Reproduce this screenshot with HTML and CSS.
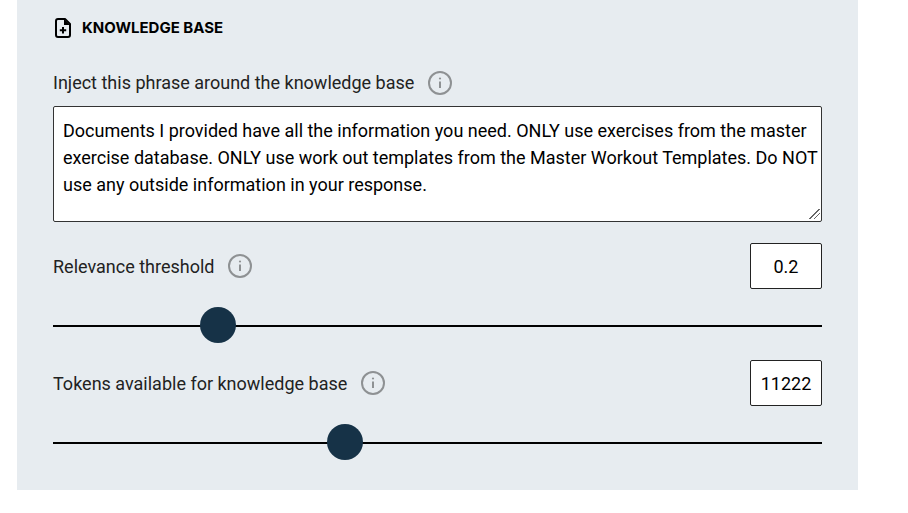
FILE: index.html
```html
<!DOCTYPE html>
<html lang="en">
<head>
<meta charset="utf-8">
<title>Knowledge base</title>
<link rel="stylesheet" href="styles.css">
</head>
<body>
<svg class="sprite" aria-hidden="true">
  <symbol id="info" viewBox="0 0 24 24">
    <circle cx="12" cy="12" r="11" fill="none" stroke="currentColor" stroke-width="2"/>
    <path d="M12 10.5V17" fill="none" stroke="currentColor" stroke-width="2"/>
    <circle cx="12" cy="7.5" r="1.1" fill="currentColor"/>
  </symbol>
</svg>
<main class="panel">
  <h2 class="heading">
    <svg class="heading-icon" viewBox="0 0 16 20" aria-hidden="true">
      <path d="M10 1H3a2 2 0 0 0-2 2v14a2 2 0 0 0 2 2h10a2 2 0 0 0 2-2V6z" fill="none" stroke="currentColor" stroke-width="2" stroke-linejoin="round"/>
      <path d="M9 1v6h6z" fill="currentColor"/>
      <path d="M8 9v6.500M4.800 12.200h6.400" fill="none" stroke="currentColor" stroke-width="2"/>
    </svg>
    KNOWLEDGE BASE
  </h2>
  <div class="label-row">
    <label for="phrase">Inject this phrase around the knowledge base</label>
    <svg class="info"><use href="#info"/></svg>
  </div>
  <textarea id="phrase" class="phrase" spellcheck="false">Documents I provided have all the information you need. ONLY use exercises from the master exercise database. ONLY use work out templates from the Master Workout Templates. Do NOT use any outside information in your response.</textarea>
  <section class="setting">
    <div class="label-row">
      <label for="relevance">Relevance threshold</label>
      <svg class="info"><use href="#info"/></svg>
      <input class="value" type="text" value="0.2" aria-label="Relevance threshold value">
    </div>
    <input id="relevance" class="slider" type="range" min="0" max="1" step="0.1" value="0.2">
  </section>
  <section class="setting">
    <div class="label-row">
      <label for="tokens">Tokens available for knowledge base</label>
      <svg class="info"><use href="#info"/></svg>
      <input class="value" type="text" value="11222" aria-label="Tokens available value">
    </div>
    <input id="tokens" class="slider" type="range" min="0" max="30000" value="11222">
  </section>
</main>
</body>
</html>
```
FILE: styles.css
```css
* {
  box-sizing: border-box;
}

body {
  margin: 0 50px 0 17px;
  background: #fff;
  color: #000;
  font: 18px/27px Roboto, "Liberation Sans", sans-serif;
}

.sprite {
  display: none;
}

.panel {
  padding: 14px 36px 29px;
  background: #e7ecf0;
}

.heading {
  display: flex;
  align-items: center;
  gap: 11px;
  margin: 0 0 28px 2px;
  font-family: Inter, sans-serif;
  font-size: 15px;
  font-weight: 700;
}

.heading-icon {
  width: 16px;
  height: 20px;
}

.label-row {
  display: flex;
  align-items: center;
  color: #222;
}

.info {
  width: 24px;
  height: 24px;
  margin-left: 14px;
  color: #8e9193;
}

.phrase {
  display: block;
  width: 100%;
  height: 116px;
  margin: 10px 0 21px;
  padding: 10px 0 10px 9px;
  border: 1px solid #333;
  border-radius: 2px;
  background: #fff;
  color: #000;
  font: inherit;
  overflow: hidden;
  resize: vertical;
}

.phrase::-webkit-resizer {
  background: linear-gradient(135deg, transparent 46%, #666 46% 54%, transparent 54% 68%, #666 68% 76%, transparent 76%) 3px 3px / 11px 10px no-repeat;
}

.setting + .setting {
  margin-top: 16px;
}

.value {
  width: 72px;
  height: 46px;
  margin-left: auto;
  padding: 0;
  border: 1px solid #222;
  border-radius: 2px;
  background: #fff;
  color: #000;
  font: inherit;
  text-align: center;
}

.slider {
  display: block;
  width: 100%;
  height: 36px;
  margin: 19px 0 0;
  background: transparent;
  appearance: none;
}

.slider::-webkit-slider-runnable-track {
  height: 2px;
  background: #000;
}

.slider::-webkit-slider-thumb {
  width: 36px;
  height: 36px;
  margin-top: -18px;
  border-radius: 50%;
  background: #163247;
  appearance: none;
}
```
